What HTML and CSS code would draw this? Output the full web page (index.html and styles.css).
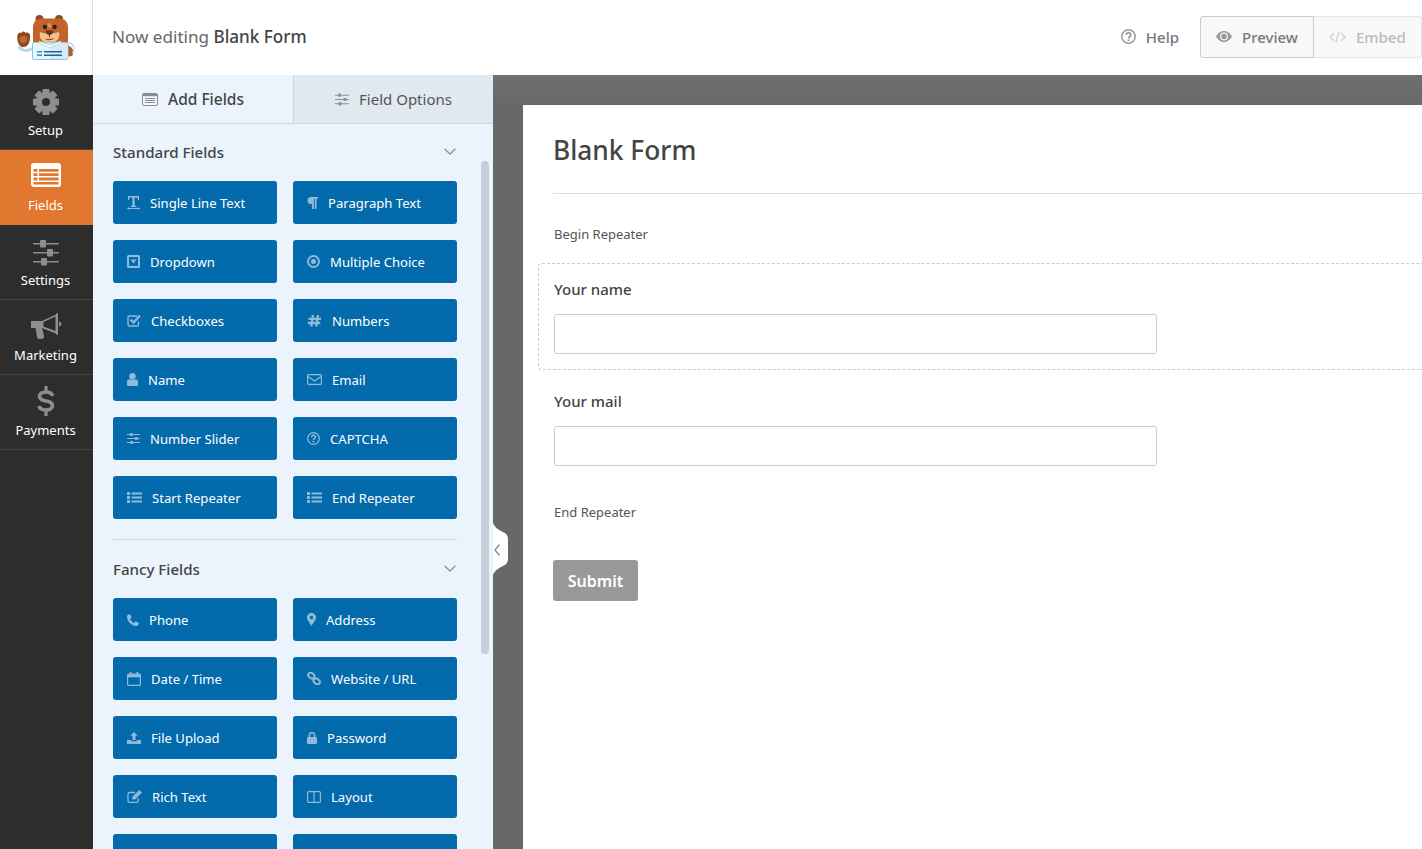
FILE: index.html
```html
<!DOCTYPE html>
<html lang="en">
<head>
    <meta charset="UTF-8">
    <meta name="viewport" content="width=device-width, initial-scale=1.0">
    <title>Blank Form</title>
    <link rel="stylesheet" href="styles.css">
</head>
<body>
    <svg class="icon-defs" width="0" height="0">
        <symbol id="i-single" viewBox="0 0 13 14"><path d="M1 0h11v4h-1l-.6-2.400H7.600v8l1.600.5V11H3.800v-.9l1.600-.5v-8H2.600L2 4H1z"/><path d="M0 12.500L2 11v1h9v-1l2 1.500L11 14v-1H2v1z"/></symbol>
        <symbol id="i-para" viewBox="0 0 11 12"><path d="M4 0h7v1.700H9.600V12H7.800V1.700H6.900V12H5.100V7H4a3.500 3.500 0 0 1 0-7z"/></symbol>
        <symbol id="i-drop" viewBox="0 0 13 13"><path fill-rule="evenodd" d="M1.500 0h10A1.500 1.500 0 0 1 13 1.500v10a1.500 1.500 0 0 1-1.500 1.500h-10A1.500 1.500 0 0 1 0 11.500v-10A1.500 1.500 0 0 1 1.500 0zM2 2v9h9V2zM3.500 4.500h6L6.500 8.500z"/></symbol>
        <symbol id="i-radio" viewBox="0 0 13 13"><circle cx="6.500" cy="6.500" r="5.500" fill="none" stroke="currentColor" stroke-width="1.900"/><circle cx="6.500" cy="6.500" r="2.500"/></symbol>
        <symbol id="i-check" viewBox="0 0 14 13"><path fill="none" stroke="currentColor" stroke-width="1.400" d="M11.500 7.500v3a1.500 1.500 0 0 1-1.500 1.500H2.500A1.500 1.500 0 0 1 1 10.500v-7A1.500 1.500 0 0 1 2.500 2H10"/><path fill="none" stroke="currentColor" stroke-width="2.300" d="M3.500 5.500L6.500 8.500 13 1.500"/></symbol>
        <symbol id="i-hash" viewBox="0 0 15 13"><path fill="none" stroke="currentColor" stroke-width="2.300" d="M6 1L4.300 12.500M11 1L9.300 12.500M1.500 4.800h12.500M.8 9h12.500"/></symbol>
        <symbol id="i-user" viewBox="0 0 11 13"><circle cx="5.500" cy="3.200" r="3.200"/><path d="M2 6.500h7a2 2 0 0 1 2 2V12a1 1 0 0 1-1 1H1a1 1 0 0 1-1-1V8.500a2 2 0 0 1 2-2z"/></symbol>
        <symbol id="i-mail" viewBox="0 0 15 11"><rect x=".6" y=".6" width="13.800" height="9.800" rx="1" fill="none" stroke="currentColor" stroke-width="1.200"/><path fill="none" stroke="currentColor" stroke-width="1.200" d="M1 2.500l6.500 4.500L14 2.500"/></symbol>
        <symbol id="i-slider" viewBox="0 0 13 11"><path d="M0 1h13v1H0zM0 5h13v1H0zM0 9h13v1H0z"/><rect x="3" y="0" width="2.500" height="3" rx=".5"/><rect x="8" y="4" width="2.500" height="3" rx=".5"/><rect x="3.500" y="8" width="2.500" height="3" rx=".5"/></symbol>
        <symbol id="i-help" viewBox="0 0 13 13"><circle cx="6.500" cy="6.500" r="5.800" fill="none" stroke="currentColor" stroke-width="1.300"/><path fill="none" stroke="currentColor" stroke-width="1.500" d="M4.600 5.200a1.900 1.900 0 1 1 2.900 1.500c-.7.500-1 .8-1 1.500"/><rect x="5.700" y="9" width="1.600" height="1.500"/></symbol>
        <symbol id="i-list" viewBox="0 0 15 11"><rect y="0" width="3" height="3" rx=".6"/><rect y="4" width="3" height="3" rx=".6"/><rect y="8" width="3" height="3" rx=".6"/><path d="M4.500 .6H15v1.800H4.500zM4.500 4.600H15v1.800H4.500zM4.500 8.600H15v1.800H4.500z"/></symbol>
        <symbol id="i-phone" viewBox="0 0 12 12"><path d="M2.800 0l1.600 2.900c.2.400.1.700-.2 1L3.100 5c.7 1.500 2.300 3.100 3.900 3.900l1.100-1.100c.3-.3.700-.4 1-.2L12 9.200c0 1-.9 2.800-2.800 2.800C4.700 12 0 7.300 0 2.800 0 .9 1.800 0 2.800 0z"/></symbol>
        <symbol id="i-pin" viewBox="0 0 9 13"><path fill-rule="evenodd" d="M4.500 0A4.500 4.500 0 0 1 9 4.500C9 7 6 10.500 4.500 13 3 10.500 0 7 0 4.500A4.500 4.500 0 0 1 4.500 0zM4.500 2.800a1.700 1.700 0 1 0 0 3.400 1.700 1.700 0 0 0 0-3.400z"/></symbol>
        <symbol id="i-cal" viewBox="0 0 14 14"><rect x=".6" y="2.100" width="12.800" height="11.300" rx="1" fill="none" stroke="currentColor" stroke-width="1.200"/><path d="M1 2.500h12v2.800H1z"/><rect x="2.800" y="0" width="1.800" height="3.800" rx=".5"/><rect x="9.400" y="0" width="1.800" height="3.800" rx=".5"/></symbol>
        <symbol id="i-link" viewBox="0 0 14 13"><g fill="none" stroke="currentColor" stroke-width="2"><rect x="1" y="1.200" width="6.600" height="4.800" rx="2.400" transform="rotate(38 4.300 3.600)"/><rect x="6.400" y="7" width="6.600" height="4.800" rx="2.400" transform="rotate(38 9.700 9.400)"/></g></symbol>
        <symbol id="i-upload" viewBox="0 0 14 12"><path d="M7 0l3.700 3.800H8.500V8h-3V3.800H3.300z"/><path d="M0 8h4.300v1.300h5.400V8H14v4H0z"/></symbol>
        <symbol id="i-lock" viewBox="0 0 10 12"><path fill-rule="evenodd" d="M1.600 5V3.400a3.400 3.400 0 0 1 6.800 0V5H9a1 1 0 0 1 1 1v5a1 1 0 0 1-1 1H1a1 1 0 0 1-1-1V6a1 1 0 0 1 1-1zM3.200 5h3.600V3.400a1.800 1.800 0 0 0-3.600 0z"/></symbol>
        <symbol id="i-edit" viewBox="0 0 15 13"><path fill="none" stroke="currentColor" stroke-width="1.300" d="M11 8v2.900a1.500 1.500 0 0 1-1.500 1.500h-7A1.500 1.500 0 0 1 1 10.900V4a1.500 1.500 0 0 1 1.500-1.500H8"/><path d="M12.300 0L15 2.500 8 9.500H5.300V6.800z"/></symbol>
        <symbol id="i-cols" viewBox="0 0 14 12"><rect x=".6" y=".6" width="12.800" height="10.800" rx="1" fill="none" stroke="currentColor" stroke-width="1.200"/><path d="M6.400 1h1.200v10H6.400z"/></symbol>
        <symbol id="i-eye" viewBox="0 0 16 11"><path fill-rule="evenodd" d="M8 0c3.600 0 6.500 2.600 8 5.500C14.500 8.400 11.600 11 8 11S1.500 8.400 0 5.500C1.500 2.600 4.400 0 8 0zM8 1.500a4 4 0 1 0 0 8 4 4 0 0 0 0-8z"/><circle cx="8" cy="5.500" r="2.800"/></symbol>
        <symbol id="i-code" viewBox="0 0 17 12"><path fill="none" stroke="currentColor" stroke-width="1.100" d="M5 2L1 6l4 4M12 2l4 4-4 4M10 .5L7 11.500"/></symbol>
        <symbol id="i-form" viewBox="0 0 16 13"><rect x=".5" y=".5" width="15" height="12" rx="1.500" fill="#f5f8fc" stroke="currentColor"/><path d="M1 1h14v2.300H1zM3 5h10v1H3zM3 7h10v1H3zM3 9h10v1H3z"/></symbol>
        <symbol id="i-chev" viewBox="0 0 12 7"><path fill="none" stroke="currentColor" stroke-width="1.300" d="M.6.800L6 6l5.400-5.200"/></symbol>
    </svg>

    <header class="topbar">
        <div class="logo">
            <!-- bear mascot, drawn by hand -->
            <svg width="58" height="46" viewBox="0 0 58 46">
                <circle cx="22.500" cy="4" r="4" fill="#8f4a22"/>
                <circle cx="42" cy="4" r="4" fill="#8f4a22"/>
                <rect x="16" y="3.500" width="35" height="30" rx="8" fill="#c3622a"/>
                <path d="M32.500 8c1.500 0 2.500 2 2 4.500h-4c-.5-2.500.5-4.500 2-4.500z" fill="#dd8f55"/>
                <path d="M23 17c3 1.500 6 1.500 9 1.500s6 0 10-1.500c1.500 6-2 11-9.500 11S21.500 23 23 17z" fill="#f2c28c"/>
                <circle cx="28" cy="12" r="2.200" fill="#2b2320"/>
                <circle cx="37.500" cy="12" r="2.200" fill="#2b2320"/>
                <path d="M28.500 15.500h8c0 2.500-2 4.500-4 4.500s-4-2-4-4.500z" fill="#6d3316"/>
                <path d="M32.500 20v2.500M29 24c2 1 5 1 7.500-.5" fill="none" stroke="#6d3316"/>
                <path d="M49 31h3c3.500 1 4.500 5 4 8-.5 2.500-2.500 2.500-7 2.500z" fill="#b5582a"/>
                <path d="M2 31c1 3 3 4 6 4.500 2 .3 4 0 7-2" fill="none" stroke="#b9dbe8" stroke-width="3"/>
                <path d="M51 27.500c3.500.5 5.500 2.500 6 6 .2 2-.5 3.500-2 4.500" fill="none" stroke="#b9dbe8" stroke-width="1.400"/>
                <rect x="15.500" y="27.500" width="35.500" height="17" rx="1.500" fill="#eaf5fa" stroke="#8fc5d8"/>
                <path d="M33 28h17.500v16H33z" fill="#dbeaf1"/>
                <path d="M22 26l11 4 11-4v2l-11 5-11-5z" fill="#f7fcfe" stroke="#a9d0de" stroke-width=".7"/>
                <path d="M20 36h5v1.500h-5zM20 39.500h5V41h-5z" fill="#2b97d6"/>
                <path d="M27 36h18v1.500H27zM27 39.500h18V41H27z" fill="#1267a8"/>
                <path d="M.5 20c1-3 3-3 4-2 1-2 3-2 4 0 2-1 4 0 4.500 2 .5 4-.5 12-6.500 12C1.500 32-.5 25 .5 20z" fill="#8f4a22"/>
                <ellipse cx="6.500" cy="24.500" rx="3.800" ry="3.400" fill="#c0682f"/>
            </svg>
        </div>
        <div class="top-title">Now editing <b>Blank Form</b></div>
        <div class="top-actions">
            <a class="help-link"><svg class="ico" width="15" height="15"><use href="#i-help"/></svg>Help</a>
            <a class="top-btn preview"><svg class="ico" width="16" height="11"><use href="#i-eye"/></svg>Preview</a>
            <a class="top-btn embed"><svg class="ico" width="17" height="12"><use href="#i-code"/></svg>Embed</a>
        </div>
    </header>

    <div class="main">
        <nav class="sidebar">
            <a class="nav-item">
                <svg width="28" height="28" viewBox="0 0 28 28">
                    <g fill="#8e8e8e">
                        <rect x="10.500" y="1" width="7" height="26" rx="1"/>
                        <rect x="10.500" y="1" width="7" height="26" rx="1" transform="rotate(45 14 14)"/>
                        <rect x="10.500" y="1" width="7" height="26" rx="1" transform="rotate(90 14 14)"/>
                        <rect x="10.500" y="1" width="7" height="26" rx="1" transform="rotate(135 14 14)"/>
                    </g>
                    <circle cx="14" cy="14" r="7.500" fill="none" stroke="#8e8e8e" stroke-width="5"/>
                    <circle cx="14" cy="14" r="4" fill="#2d2d2d"/>
                </svg>
                <span>Setup</span>
            </a>
            <a class="nav-item active">
                <svg width="30" height="24" viewBox="0 0 30 24">
                    <rect width="30" height="24" rx="3" fill="#fff"/>
                    <path fill="#e27730" d="M2.500 6h4v2.800h-4zM8 6h19.500v2.800H8zM2.500 10.300h4v2.800h-4zM8 10.300h19.500v2.800H8zM2.500 14.600h4v2.800h-4zM8 14.600h19.500v2.800H8zM2.500 18.900h25v2.600h-25z"/>
                </svg>
                <span>Fields</span>
            </a>
            <a class="nav-item">
                <svg width="28" height="26" viewBox="0 0 28 26">
                    <g fill="#8e8e8e">
                        <path d="M1 3h26v1.500H1zM1 12h26v1.500H1zM1 21h26v1.500H1z"/>
                        <rect x="8" y="0" width="6" height="7.500" rx="1"/>
                        <rect x="15" y="9" width="6" height="7.500" rx="1"/>
                        <rect x="9" y="18" width="6" height="7.500" rx="1"/>
                    </g>
                </svg>
                <span>Settings</span>
            </a>
            <a class="nav-item">
                <svg width="32" height="28" viewBox="0 0 32 28">
                    <path fill="#8e8e8e" d="M1 8h11L27 1v20L12 15l2 8c.2 1.500-.5 3-2.500 3H9.500C8 26 7.200 25 7 24L5.500 15H1z"/>
                    <path fill="#2d2d2d" d="M13.500 9l12-5.500v14.500l-12-4.500z"/>
                    <rect x="26" y="0" width="2" height="22" rx="1" fill="#8e8e8e"/>
                    <path fill="#8e8e8e" d="M29 8.500c1.500.5 2.500 1.200 2.500 2.500s-1 2-2.500 2.500z"/>
                </svg>
                <span>Marketing</span>
            </a>
            <a class="nav-item">
                <svg width="18" height="30" viewBox="0 0 18 30">
                    <path fill="none" stroke="#8e8e8e" stroke-width="3.600" d="M15.500 10C15 7.300 12.500 6 9 6 5 6 2.500 7.800 2.500 10.500c0 6 13 3 13 9 0 2.700-2.500 4.500-6.500 4.500-3.800 0-6.300-1.300-7-4"/>
                    <path fill="#8e8e8e" d="M7.400 0h3.200v6H7.400zM7.400 24h3.200v6H7.400z"/>
                </svg>
                <span>Payments</span>
            </a>
        </nav>

        <aside class="panel">
            <div class="tabs">
                <a class="tab current"><svg class="ico" width="16" height="13"><use href="#i-form"/></svg>Add Fields</a>
                <a class="tab"><svg class="ico" width="14" height="13"><use href="#i-slider"/></svg>Field Options</a>
            </div>
            <div class="panel-body">
                <section class="group">
                    <h3 class="group-head">Standard Fields<svg class="ico" width="12" height="7"><use href="#i-chev"/></svg></h3>
                    <div class="field-grid">
                        <a class="field-btn"><svg width="13" height="14"><use href="#i-single"/></svg>Single Line Text</a>
                        <a class="field-btn"><svg width="11" height="12"><use href="#i-para"/></svg>Paragraph Text</a>
                        <a class="field-btn"><svg width="13" height="13"><use href="#i-drop"/></svg>Dropdown</a>
                        <a class="field-btn"><svg width="13" height="13"><use href="#i-radio"/></svg>Multiple Choice</a>
                        <a class="field-btn"><svg width="14" height="13"><use href="#i-check"/></svg>Checkboxes</a>
                        <a class="field-btn"><svg width="15" height="13"><use href="#i-hash"/></svg>Numbers</a>
                        <a class="field-btn"><svg width="11" height="13"><use href="#i-user"/></svg>Name</a>
                        <a class="field-btn"><svg width="15" height="11"><use href="#i-mail"/></svg>Email</a>
                        <a class="field-btn"><svg width="13" height="11"><use href="#i-slider"/></svg>Number Slider</a>
                        <a class="field-btn"><svg width="13" height="13"><use href="#i-help"/></svg>CAPTCHA</a>
                        <a class="field-btn"><svg width="15" height="11"><use href="#i-list"/></svg>Start Repeater</a>
                        <a class="field-btn"><svg width="15" height="11"><use href="#i-list"/></svg>End Repeater</a>
                    </div>
                </section>
                <section class="group fancy">
                    <h3 class="group-head">Fancy Fields<svg class="ico" width="12" height="7"><use href="#i-chev"/></svg></h3>
                    <div class="field-grid">
                        <a class="field-btn"><svg width="12" height="12"><use href="#i-phone"/></svg>Phone</a>
                        <a class="field-btn"><svg width="9" height="13"><use href="#i-pin"/></svg>Address</a>
                        <a class="field-btn"><svg width="14" height="14"><use href="#i-cal"/></svg>Date / Time</a>
                        <a class="field-btn"><svg width="14" height="13"><use href="#i-link"/></svg>Website / URL</a>
                        <a class="field-btn"><svg width="14" height="12"><use href="#i-upload"/></svg>File Upload</a>
                        <a class="field-btn"><svg width="10" height="12"><use href="#i-lock"/></svg>Password</a>
                        <a class="field-btn"><svg width="15" height="13"><use href="#i-edit"/></svg>Rich Text</a>
                        <a class="field-btn"><svg width="14" height="12"><use href="#i-cols"/></svg>Layout</a>
                        <a class="field-btn"></a>
                        <a class="field-btn"></a>
                    </div>
                </section>
            </div>
            <div class="scroll-thumb"></div>
            <svg class="collapse" width="16" height="52" viewBox="0 0 16 52">
                <path d="M0 0c2 5 6 7 10 9 4 2 5 4 5 8v18c0 4-1 6-5 8-4 2-8 4-10 9z" fill="#fff"/>
                <path d="M6.500 21.500L2 27l4.500 5.500" fill="none" stroke="#7f93a8" stroke-width="1.400"/>
            </svg>
        </aside>

        <main class="canvas">
            <div class="form-page">
                <h1 class="form-title">Blank Form</h1>
                <p class="marker first">Begin Repeater</p>
                <div class="repeat-box">
                    <label class="field-label">Your name</label>
                    <input class="text-input" type="text">
                </div>
                <div class="plain-field">
                    <label class="field-label">Your mail</label>
                    <input class="text-input" type="text">
                </div>
                <p class="marker">End Repeater</p>
                <button class="submit-btn">Submit</button>
            </div>
        </main>
    </div>
</body>
</html>
```

FILE: styles.css
```css
* {
    box-sizing: border-box;
}

html, body {
    height: 100%;
}

body {
    margin: 0;
    overflow: hidden;
    font-family: "Noto Sans", "Open Sans", sans-serif;
    color: #444;
    background: #fff;
    display: flex;
    flex-direction: column;
}

.icon-defs {
    position: absolute;
}

svg {
    fill: currentColor;
    flex: none;
}

/* top bar */
.topbar {
    height: 75px;
    flex: none;
    display: flex;
    align-items: center;
    background: #fff;
}

.logo {
    width: 93px;
    height: 75px;
    border-right: 1px solid #ddd;
    padding: 15px 0 0 17px;
}

.top-title {
    margin: 0 0 2px 19px;
    font-size: 17.100px;
    color: #666;
}

.top-title b {
    font-weight: 500;
    color: #444;
}

.top-actions {
    margin: 0 0 2px auto;
    display: flex;
    align-items: center;
    font-size: 15px;
    font-weight: 500;
}

.help-link {
    display: flex;
    align-items: center;
    gap: 10px;
    margin-right: 21px;
    color: #777;
}

.help-link .ico {
    color: #999;
}

.top-btn {
    height: 42px;
    display: flex;
    align-items: center;
    gap: 10px;
    background: #f8f8f8;
    border: 1px solid #ccc;
}

.preview {
    width: 114px;
    padding-left: 15px;
    color: #777;
    border-radius: 3px 0 0 3px;
}

.preview .ico {
    color: #999;
}

.embed {
    width: 108px;
    padding-left: 15px;
    color: #bbb;
    border-color: #e6e6e6;
    border-left: 0;
    border-radius: 0 3px 3px 0;
}

.embed .ico {
    color: #ccc;
}

.main {
    flex: 1;
    min-height: 0;
    display: flex;
}

/* left nav */
.sidebar {
    width: 93px;
    flex: none;
    background: #2d2d2d;
}

.nav-item {
    height: 75px;
    display: flex;
    flex-direction: column;
    align-items: center;
    justify-content: flex-end;
    padding: 0 2px 10px 0;
    gap: 5px;
    font-size: 13px;
    color: #fff;
    border-bottom: 1px solid #444;
}

.nav-item.active {
    background: #e27730;
    border-bottom-color: #e27730;
    gap: 9px;
}

/* fields panel */
.panel {
    width: 400px;
    flex: none;
    position: relative;
    background: #ebf3fc;
    display: flex;
    flex-direction: column;
}

.tabs {
    height: 49px;
    flex: none;
    display: flex;
    box-shadow: inset 0 1px 2px rgba(0, 0, 0, 0.06);
}

.tab {
    width: 199px;
    display: flex;
    align-items: center;
    justify-content: center;
    gap: 10px;
    font-size: 15px;
    color: #555;
    background: #e0e8f0;
    border-bottom: 1px solid #ced7e0;
}

.tab.current {
    width: 201px;
    background: #ebf3fc;
    font-size: 15.500px;
    font-weight: 500;
    color: #444;
    border-right: 1px solid #ced7e0;
}

.tab .ico {
    color: #888e96;
}

.panel-body {
    flex: 1;
    overflow: hidden;
    padding: 0 36px 0 20px;
}

.group-head {
    height: 57px;
    margin: 0;
    padding-bottom: 2px;
    display: flex;
    align-items: center;
    justify-content: space-between;
    font-size: 15.100px;
    font-weight: 500;
    color: #444;
}

.group-head .ico {
    color: #7f93a8;
    margin-right: 1px;
}

.fancy {
    margin-top: 20px;
    padding-top: 1px;
    border-top: 1px solid #ced7e0;
}

.field-grid {
    display: grid;
    grid-template-columns: 164px 164px;
    grid-auto-rows: 43px;
    gap: 16px;
}

.field-btn {
    display: flex;
    align-items: center;
    gap: 10px;
    padding-left: 14px;
    font-size: 13.100px;
    color: #fff;
    background: #036aab;
    border-radius: 3px;
}

.field-btn svg {
    color: #8dbbd9;
}

.scroll-thumb {
    position: absolute;
    left: 388px;
    top: 86px;
    width: 8px;
    height: 493px;
    border-radius: 4px;
    background: #c6ced8;
}

.collapse {
    position: absolute;
    left: 400px;
    top: 448px;
}

/* form preview */
.canvas {
    flex: 1;
    min-width: 0;
    overflow: hidden;
    padding: 30px 0 0 30px;
    background: linear-gradient(#6f6f6f, #686868 30px);
}

.form-page {
    height: 100%;
    background: #fff;
    padding: 0 0 0 30px;
}

.form-title {
    height: 89px;
    margin: 0;
    padding: 25px 0 0 0;
    font-size: 26.300px;
    font-weight: 500;
    line-height: 40px;
    color: #444;
    border-bottom: 1px solid #ddd;
}

.marker {
    margin: 0;
    font-size: 13px;
    line-height: 18px;
    color: #555;
}

.marker.first {
    margin: 31px 0 20px 1px;
}

.repeat-box {
    height: 107px;
    margin-left: -15px;
    padding: 15px 0 0 15px;
    border: 1px dashed #ccc;
    border-right: 0;
    border-radius: 4px 0 0 4px;
}

.field-label {
    display: block;
    height: 20px;
    margin-bottom: 15px;
    font-size: 15px;
    line-height: 20px;
    font-weight: 500;
    color: #444;
}

.text-input {
    display: block;
    width: 603px;
    height: 40px;
    background: #fff;
    border: 1px solid #ccc;
    border-radius: 3px;
}

.plain-field {
    margin: 21px 0 0 1px;
}

.plain-field + .marker {
    margin: 37px 0 0 1px;
}

.submit-btn {
    display: block;
    width: 85px;
    height: 41px;
    margin-top: 39px;
    font-family: inherit;
    font-size: 16px;
    font-weight: 600;
    color: #fff;
    background: #999;
    border: 0;
    border-radius: 3px;
}
```
